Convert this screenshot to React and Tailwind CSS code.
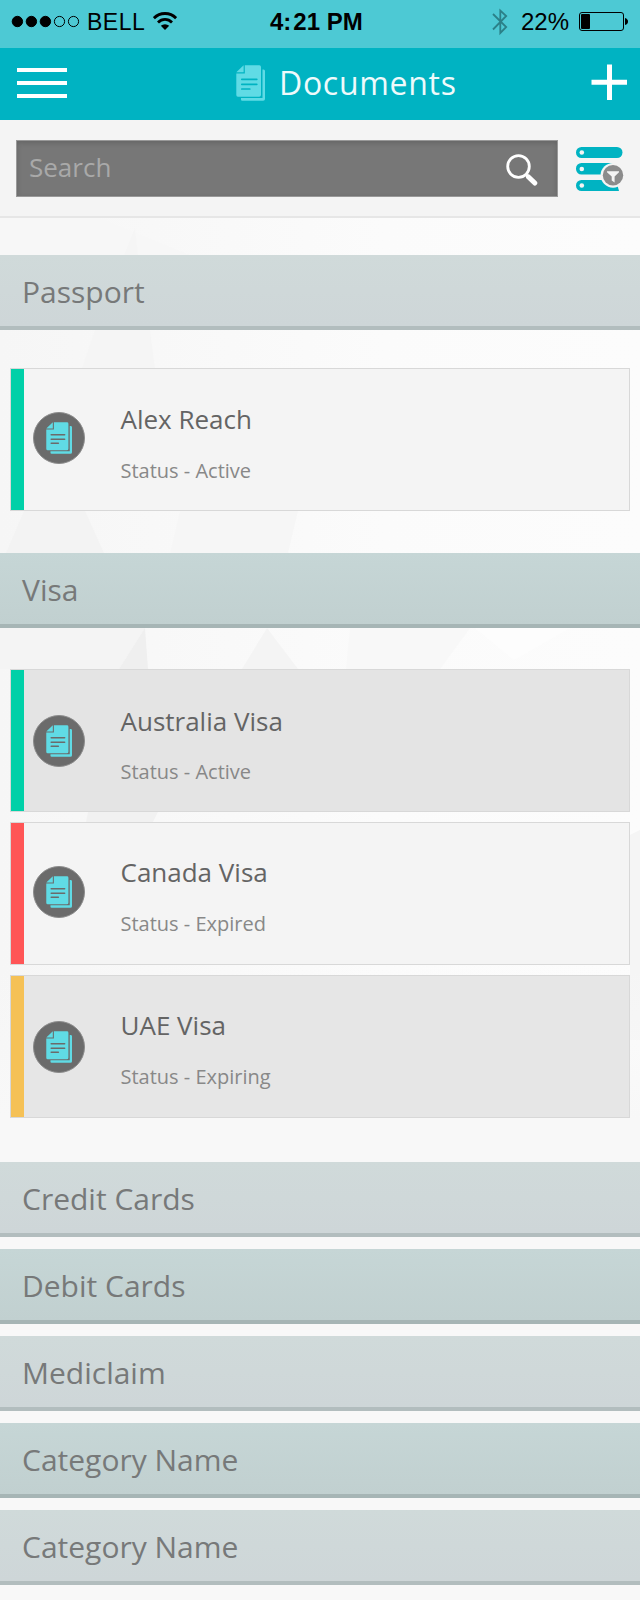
function DocumentsIcon({ className, fill, line }) {
  return (
    <svg viewBox="0 0 29 36" className={className} preserveAspectRatio="none">
      <path d="M5 35.5V33H26.5V4.5H27.5Q29 4.5 29 6V34Q29 35.8 27.2 35.8H6.2Q5 35.8 5 34.5Z" fill={fill} />
      <path d="M0.3 8.4H8.8V0.3H23.4Q25 0.3 25 1.9V30Q25 31.8 23.2 31.8H1.9Q0.3 31.8 0.3 30Z" fill={fill} />
      <path d="M0.3 7.2L7.6 0.3V7.2Z" fill={fill} />
      <path d="M5.8 14.3H20.8M5.8 19.3H20.8M5.8 24H13.8" stroke={line} strokeWidth="1.7" strokeLinecap="round" />
    </svg>
  );
}

function StatusBar() {
  return (
    <div className="flex h-12 items-start bg-[#4dc9d4] text-black font-['Liberation_Sans',sans-serif]">
      <svg viewBox="0 0 80 48" className="h-12 w-20 shrink-0">
        <g stroke="#000" strokeWidth="1">
          <circle cx="17.4" cy="21.5" r="5.2" />
          <circle cx="31.4" cy="21.5" r="5.2" />
          <circle cx="45.4" cy="21.5" r="5.2" />
          <circle cx="59.5" cy="21.5" r="5.1" fill="none" />
          <circle cx="73.5" cy="21.5" r="5.1" fill="none" />
        </g>
      </svg>
      <span className="ml-[7px] w-[61px] whitespace-nowrap text-[23px] leading-[44px] tracking-[0.5px]">BELL</span>
      <svg viewBox="0 0 24 18" className="ml-[5px] mt-3 h-[18px] w-6 shrink-0" fill="none" stroke="#000" strokeWidth="2.8">
        <path d="M0.9 6.2Q5.4 1.5 12 1.5T23.1 6.2" />
        <path d="M5 10.4Q8 7.4 12 7.4T19 10.4" />
        <path d="M12 18L7.8 13.7Q9.6 12.2 12 12.2T16.2 13.7Z" fill="#000" stroke="none" />
      </svg>
      <span className="ml-[93px] w-[160px] whitespace-nowrap text-[24px] font-bold leading-[44px]">
        4<span className="mr-[2px]">:</span>21 PM
      </span>
      <svg viewBox="0 0 16 28" className="ml-[62px] mt-2 h-7 w-4 shrink-0" fill="none" stroke="#2b8088" strokeWidth="1.8">
        <path d="M1 6L14.2 19L8.3 25V2.5L14.2 8L1 21.5" />
      </svg>
      <span className="ml-[13px] w-[51px] whitespace-nowrap text-[24px] leading-[44px]">22%</span>
      <svg viewBox="0 0 50 19" className="ml-[7px] mt-3 h-[19px] w-[50px] shrink-0">
        <rect x="0.5" y="0.5" width="44" height="18" rx="2.5" fill="none" stroke="#000" />
        <rect x="2" y="2" width="9" height="15" rx="1" />
        <path d="M46 6Q49 7 49 9.5T46 13Z" />
      </svg>
    </div>
  );
}

function Header() {
  return (
    <header className="flex h-[72px] items-start bg-[#00b3c2] text-white">
      <button className="ml-[17px] mt-5 flex w-[50px] flex-col gap-[9px]" aria-label="Menu">
        <span className="h-1 bg-white" />
        <span className="h-1 bg-white" />
        <span className="h-1 bg-white" />
      </button>
      <DocumentsIcon className="ml-[169px] mt-[17px] h-9 w-[29px] shrink-0" fill="#60dbe5" line="#00b3c2" />
      <h1 className="ml-[14px] w-[312px] whitespace-nowrap text-[32px] font-normal leading-[69px] tracking-[0.7px] text-[#eefafb]">Documents</h1>
      <svg viewBox="0 0 36 36" className="mt-4 h-9 w-9 shrink-0">
        <path d="M18.5 0.5V36M0.5 18.3H36" stroke="#fff" strokeWidth="5" />
      </svg>
    </header>
  );
}

function SearchRow() {
  return (
    <div className="flex h-[98px] items-start border-b-2 border-[#e6e6e6] bg-[#f4f4f4] pl-4 pt-5">
      <div className="flex h-[57px] w-[542px] justify-between border border-[#999] bg-[#777] pl-3 shadow-[inset_0_2px_5px_#666]">
        <span className="text-[26px] leading-[53px] text-[#a9a9a9]">Search</span>
        <svg viewBox="0 0 32 32" className="mr-[19px] mt-[13px] h-8 w-8" fill="none" stroke="#fff">
          <circle cx="12.5" cy="12.5" r="10.8" strokeWidth="2.8" />
          <path d="M20 20.5L22 22.5" strokeWidth="3" />
          <path d="M22.5 23L28.8 29" strokeWidth="5" strokeLinecap="round" />
        </svg>
      </div>
      <svg viewBox="0 0 48 46" className="ml-[18px] mt-[7px] h-[46px] w-12">
        <g fill="#00b3c2">
          <rect width="46.5" height="11" rx="5.5" />
          <rect y="16" width="40" height="11.5" rx="5.5" />
          <path d="M5.5 33H40L43 44H5.5A5.5 5.5 0 0 1 5.5 33Z" />
        </g>
        <g fill="#f4f4f4">
          <circle cx="5.8" cy="5.5" r="2.3" />
          <circle cx="5.8" cy="22" r="2.3" />
          <circle cx="5.8" cy="38.5" r="2.3" />
          <circle cx="37" cy="28.3" r="12.4" />
        </g>
        <circle cx="37" cy="28.3" r="10.2" fill="#8c8c8c" />
        <path d="M31 24.2H43V25.2L38.6 29.5V35.5L35.7 33.6V29.5L31 25.2Z" fill="#f4f4f4" />
      </svg>
    </div>
  );
}

const tones = {
  gray: "bg-linear-to-b from-[#d0dada] to-[#ced6d8] border-[#b2bdbe]",
  green: "bg-linear-to-b from-[#c6d6d6] to-[#c1d0d0] border-[#a6b5b5]",
};

function Section({ title, tone }) {
  return (
    <h2 className={`h-[75px] border-b-4 pl-[22px] text-[30px] font-normal leading-[73px] text-[#777979] ${tones[tone]}`}>
      {title}
    </h2>
  );
}

function DocumentCard({ name, status, stripe, bg, iconTop, textTop, statusTop }) {
  return (
    <div className={`flex h-[143px] border border-[#d8d8d8] ${bg}`}>
      <div className={`w-[13px] ${stripe}`} />
      <div className={`ml-[9px] flex h-[52px] w-[52px] items-center justify-center rounded-full border border-[#8c8c8c] bg-[#6b6b6b] ${iconTop}`}>
        <DocumentsIcon className="h-8 w-[26px]" fill="#60dbe5" line="#6b6b6b" />
      </div>
      <div className={`ml-[35.5px] ${textTop}`}>
        <div className="text-[26px] leading-9 text-[#646464]">{name}</div>
        <div className={`text-[20px] leading-7 text-[#888] ${statusTop}`}>{status}</div>
      </div>
    </div>
  );
}

function Facets() {
  return (
    <svg viewBox="0 0 640 1600" className="absolute inset-0 -z-10 h-[1600px] w-[640px]">
      <defs>
        <linearGradient id="base" x1="0" x2="1" y1="0" y2="0">
          <stop offset="0" stopColor="#f6f6f6" />
          <stop offset="0.6" stopColor="#fbfbfb" />
          <stop offset="1" stopColor="#fcfcfc" />
        </linearGradient>
        <linearGradient id="fade" x1="0" x2="0" y1="0" y2="1">
          <stop offset="0" stopColor="#f8f8f8" stopOpacity="0" />
          <stop offset="1" stopColor="#f8f8f8" />
        </linearGradient>
      </defs>
      <rect width="640" height="1600" fill="url(#base)" />
      <path d="M0 218H100L190 255H0Z" fill="#f7f7f7" />
      <path d="M135 228L124 255H138Z" fill="#f5f5f5" />
      <path d="M95 330H150L155 368H82Z" fill="#f5f5f5" />
      <path d="M24 511H85L104 553H6Z" fill="#f3f3f3" />
      <path d="M180 511H298L288 553H170Z" fill="#f6f6f6" />
      <path d="M0 628H145L119 669H0Z" fill="#f4f4f4" />
      <path d="M145 628L119 669H148Z" fill="#efefef" />
      <path d="M267 628L242 669H298Z" fill="#f4f4f4" />
      <path d="M350 628H470L440 669H346Z" fill="#f8f8f8" />
      <path d="M475 628H570L514 660Z" fill="#fdfdfd" />
      <path d="M88 812H158L153 822H86Z" fill="#f1f1f1" />
      <path d="M640 830L630 835V1040H640Z" fill="#f5f5f5" />
      <rect y="965" width="640" height="153" fill="url(#fade)" />
      <rect y="1118" width="640" height="482" fill="#f8f8f8" />
    </svg>
  );
}

const visas = [
  { name: "Australia Visa", status: "Status - Active", stripe: "bg-[#00d0a8]", bg: "bg-[#e4e4e4]", iconTop: "mt-[45px]", textTop: "pt-[33px]", statusTop: "mt-[19px]" },
  { name: "Canada Visa", status: "Status - Expired", stripe: "bg-[#ff5556]", bg: "bg-[#f4f4f4]", iconTop: "mt-[43px]", textTop: "pt-[31px]", statusTop: "mt-5" },
  { name: "UAE Visa", status: "Status - Expiring", stripe: "bg-[#f5c156]", bg: "bg-[#e6e6e6]", iconTop: "mt-[45px]", textTop: "pt-[31px]", statusTop: "mt-5" },
];

const categories = [
  { title: "Credit Cards", tone: "gray" },
  { title: "Debit Cards", tone: "green" },
  { title: "Mediclaim", tone: "gray" },
  { title: "Category Name", tone: "green" },
  { title: "Category Name", tone: "gray" },
];

export default function App() {
  return (
    <div className="relative isolate h-[1600px] w-[640px] overflow-hidden font-['Open_Sans',sans-serif]">
      <Facets />
      <StatusBar />
      <Header />
      <SearchRow />
      <main className="pt-[37px]">
        <Section title="Passport" tone="gray" />
        <div className="px-2.5 pb-[42px] pt-[38px]">
          <DocumentCard name="Alex Reach" status="Status - Active" stripe="bg-[#00d0a8]" bg="bg-[#f4f4f4]" iconTop="mt-[43px]" textTop="pt-8" statusTop="mt-5" />
        </div>
        <Section title="Visa" tone="green" />
        <div className="flex flex-col gap-2.5 px-2.5 pb-11 pt-[41px]">
          {visas.map((v) => (
            <DocumentCard key={v.name} {...v} />
          ))}
        </div>
        <div className="flex flex-col gap-3">
          {categories.map((c, i) => (
            <Section key={i} {...c} />
          ))}
        </div>
      </main>
    </div>
  );
}
